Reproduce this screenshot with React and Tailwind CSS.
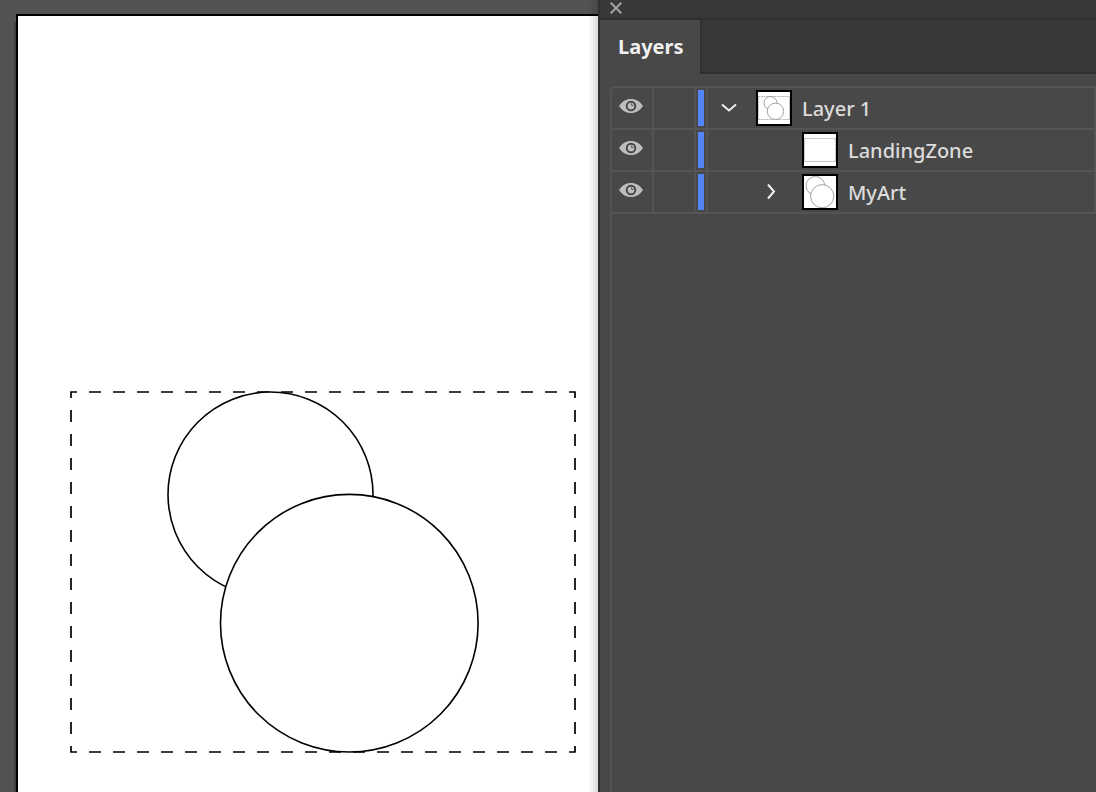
import React, { useState } from 'react';

const LAYERS = [
  { id: 'layer-1', name: 'Layer 1', level: 0, arrow: 'down', art: 'all' },
  { id: 'landing-zone', name: 'LandingZone', level: 1, arrow: null, art: 'zone' },
  { id: 'my-art', name: 'MyArt', level: 1, arrow: 'right', art: 'circles' },
];

function EyeIcon() {
  return (
    <svg width="24" height="14" viewBox="0 0 24 14" aria-hidden="true">
      <path d="M0 7C3 2.5 7 0 12 0s9 2.5 12 7c-3 4.5-7 7-12 7S3 11.5 0 7z" fill="#bdbdbd" />
      <circle cx="12" cy="7" r="4.3" fill="#bdbdbd" stroke="#464646" strokeWidth="1.9" />
      <path d="M12.6 4.4v2h2" fill="none" stroke="#464646" strokeWidth="0.8" />
    </svg>
  );
}

function Arrow({ dir }) {
  return (
    <svg width="16" height="16" viewBox="0 0 16 16" fill="none" stroke="#f0f0f0" strokeWidth="2" aria-hidden="true">
      <path d={dir === 'down' ? 'M1 4.5l7 6 7-6' : 'M5 0.5l6 7-6 7'} />
    </svg>
  );
}

function Thumb({ art }) {
  return (
    <div className="w-9 h-9 shrink-0 border-2 border-black bg-white">
      <svg width="32" height="32" viewBox="0 0 32 32" fill="none" stroke="#8c8c8c" strokeWidth="0.8" aria-hidden="true">
        {art !== 'circles' && (
          <rect x="0.5" y="4.5" width="31" height="23" stroke="#a8a8a8" strokeDasharray="2 0.6" />
        )}
        {art === 'all' && (
          <>
            <circle cx="12.5" cy="11" r="6.5" />
            <circle cx="17.5" cy="19.3" r="8.2" fill="#ffffff" />
          </>
        )}
        {art === 'circles' && (
          <>
            <circle cx="11.4" cy="9.8" r="9.3" />
            <circle cx="18.2" cy="20.2" r="11.6" fill="#ffffff" />
          </>
        )}
      </svg>
    </div>
  );
}

function LayerRow({ layer, visible, onToggle }) {
  return (
    <li className="flex h-[42px] border-b-2 border-r-2 border-[#545454]">
      <button
        type="button"
        aria-label={`Toggle ${layer.name} visibility`}
        aria-pressed={visible}
        onClick={onToggle}
        className="w-[42px] pb-1 pr-0.5 flex items-center justify-center border-r-2 border-[#545454]"
      >
        {visible && <EyeIcon />}
      </button>
      <button type="button" aria-label={`Lock ${layer.name}`} className="w-[42px] border-r-2 border-[#545454]" />
      <div className="w-3 p-0.5 border-r-2 border-[#545454]">
        <div className="w-1.5 h-full bg-[#5384fb]" />
      </div>
      <div className={`flex flex-1 items-center ${layer.level ? 'pl-[42px]' : ''}`}>
        <div className={`w-[42px] flex justify-center ${layer.level ? 'mr-2.5' : 'mr-1.5'}`}>
          {layer.arrow && (
            <button type="button" aria-label={`Expand ${layer.name}`}>
              <Arrow dir={layer.arrow} />
            </button>
          )}
        </div>
        <Thumb art={layer.art} />
        <span className="ml-2.5 pt-0.5 text-[20px] leading-7 font-medium text-[#dcdcdc]">{layer.name}</span>
      </div>
    </li>
  );
}

export default function App() {
  const [hidden, setHidden] = useState({});

  return (
    <div className="min-h-screen grid grid-cols-[598fr_498fr] bg-[#535353] font-['Noto_Sans',sans-serif]">
      {/* Canvas */}
      <main className="relative flex overflow-hidden pl-4 pt-3.5">
        <div className="flex-1 border-l-2 border-t-2 border-black bg-white shadow-[-2px_8px_0_#404040]">
          <svg
            width="506"
            height="362"
            viewBox="70 391 506 362"
            fill="#ffffff"
            stroke="#000000"
            className="ml-[52px] mt-[375px]"
            role="img"
            aria-label="Artboard drawing"
          >
            {/* starts in the middle of a gap so every corner gets a joined dash */}
            <path
              d="M83 392H575V752H71V392H83"
              strokeWidth="1.7"
              strokeDasharray="12 12"
              strokeDashoffset="18"
            />
            <circle cx="270.5" cy="494.5" r="102.5" strokeWidth="1.6" />
            <circle cx="349.3" cy="623.2" r="128.8" strokeWidth="1.6" />
          </svg>
        </div>
        {/* shadow cast by the panel */}
        <div className="absolute inset-y-0 right-0 w-2.5 bg-linear-to-l from-black/15 to-transparent" />
      </main>

      {/* Layers panel */}
      <aside className="flex flex-col border-l-2 border-[#303030] bg-[#484848]">
        <div className="h-5 pl-2.5 pt-0.5 border-b-2 border-[#303030] bg-[#383838]">
          <button type="button" aria-label="Close panel" className="block">
            <svg width="12" height="12" viewBox="0 0 12 12" stroke="#a0a0a0" strokeWidth="2.2" aria-hidden="true">
              <path d="M0.7 0.7l10.6 10.6M11.3 0.7L0.7 11.3" />
            </svg>
          </button>
        </div>
        <div className="flex h-[54px]" role="tablist">
          <button type="button" role="tab" aria-selected="true" className="px-[18px] pr-4 text-[20px] leading-7 font-bold text-[#f0f0f0]">
            Layers
          </button>
          <div className="flex-1 border-l-2 border-b-2 border-[#303030] bg-[#383838]" />
        </div>
        <ul className="flex-1 ml-2.5 mt-3 border-l-2 border-t-2 border-[#545454] rounded-tl">
          {LAYERS.map((layer) => (
            <LayerRow
              key={layer.id}
              layer={layer}
              visible={!hidden[layer.id]}
              onToggle={() => setHidden({ ...hidden, [layer.id]: !hidden[layer.id] })}
            />
          ))}
        </ul>
      </aside>
    </div>
  );
}
